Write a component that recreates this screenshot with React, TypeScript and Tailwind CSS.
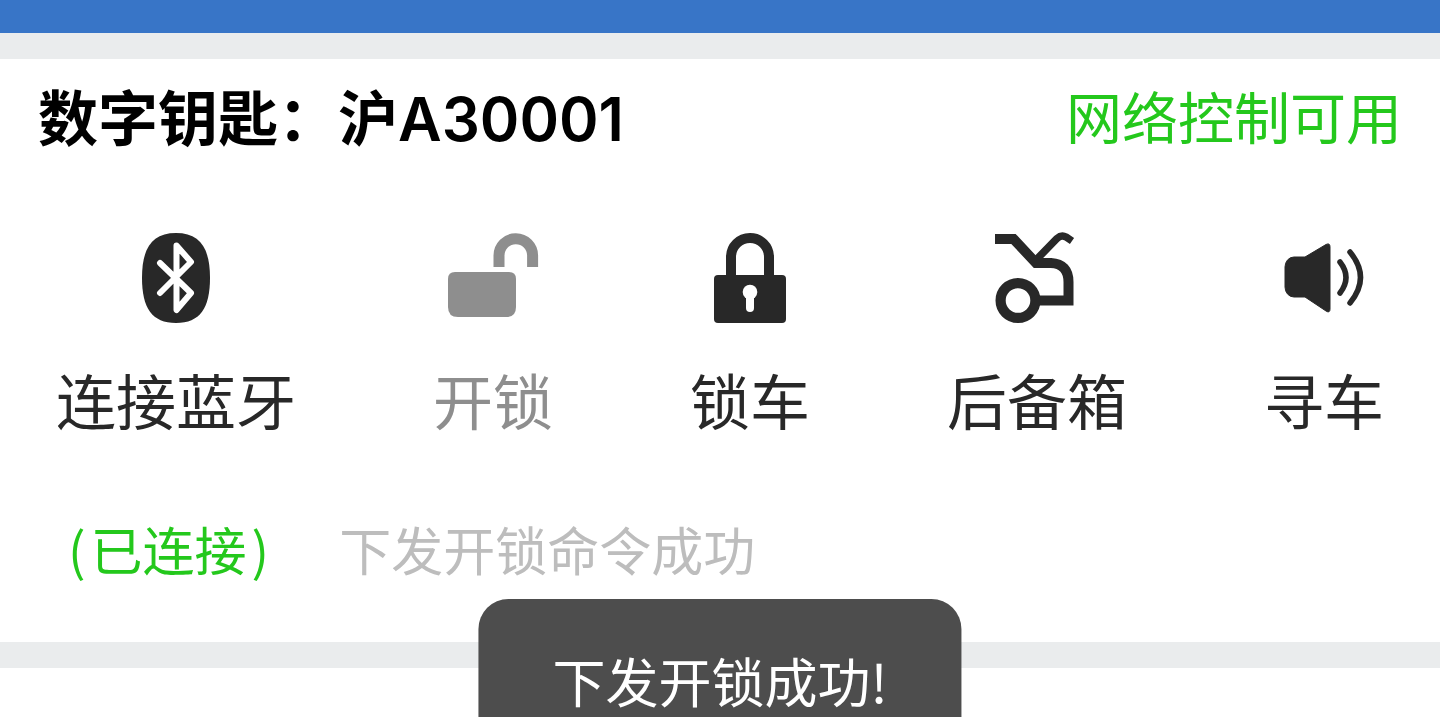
import type { ReactNode } from "react";

interface IAction {
  label: string;
  icon: ReactNode;
  disabled?: boolean;
}

function Icon({ children }: { children: ReactNode }) {
  return (
    <svg viewBox="0 0 90 90" className="size-[90px] overflow-visible" fill="none" aria-hidden="true">
      {children}
    </svg>
  );
}

const actions: IAction[] = [
  {
    label: "连接蓝牙",
    icon: (
      <Icon>
        <path
          d="M45 0C69 0 79 15 79 45S69 90 45 90 11 75 11 45 21 0 45 0Z"
          fill="currentColor"
        />
        <path
          d="M29 30L60 60L45.500 77V12.500L60 29L29 60"
          stroke="white"
          strokeWidth="6"
          strokeLinecap="round"
          strokeLinejoin="round"
        />
      </Icon>
    ),
  },
  {
    label: "开锁",
    disabled: true,
    icon: (
      <Icon>
        <path
          d="M7 39H61Q68 39 68 46V74Q68 84 58 84H10Q0 84 0 74V46Q0 39 7 39Z"
          fill="currentColor"
        />
        <path d="M51 34V22.500a16.800 16.800 0 0 1 33.600 0V34" stroke="currentColor" strokeWidth="11" />
      </Icon>
    ),
  },
  {
    label: "锁车",
    icon: (
      <Icon>
        <rect x="9" y="42" width="72" height="48" rx="4" fill="currentColor" />
        <path d="M26 44V24a19 19 0 0 1 38 0V44" stroke="currentColor" strokeWidth="10" />
        <circle cx="45" cy="59" r="7.300" fill="white" />
        <path d="M45 60V75" stroke="white" strokeWidth="8" strokeLinecap="round" />
      </Icon>
    ),
  },
  {
    label: "后备箱",
    icon: (
      <Icon>
        <path
          d="M3 6H21.500L44 30H59Q76.500 31 76.500 49V67.500H46"
          stroke="currentColor"
          strokeWidth="10"
        />
        <path d="M44 27L65 5.500Q69.500 1.500 74 4L80 8" stroke="currentColor" strokeWidth="7.500" />
        <circle cx="26" cy="67.500" r="17.400" stroke="currentColor" strokeWidth="10.200" />
      </Icon>
    ),
  },
  {
    label: "寻车",
    icon: (
      <Icon>
        <path
          d="M15 24H26L47 11.500Q51 9.500 51 14V76Q51 80.500 47 78L26 64H15Q11 64 8.500 61Q6 58 6 54V34Q6 30 8.500 27Q11 24 15 24Z"
          fill="currentColor"
          stroke="currentColor"
          strokeLinejoin="round"
        />
        <path
          d="M61 29Q73 44.500 61 60M71 19Q92 44.500 71 70"
          stroke="currentColor"
          strokeWidth="5.500"
          strokeLinecap="round"
        />
      </Icon>
    ),
  },
];

function ActionButton({ action }: { action: IAction }) {
  return (
    <button
      type="button"
      disabled={action.disabled}
      className="flex flex-col items-center gap-[34px] whitespace-nowrap text-[#282828] disabled:text-[#8e8e8e]"
    >
      {action.icon}
      <span className="text-[60px] leading-[84px]">{action.label}</span>
    </button>
  );
}

export default function App() {
  return (
    <div className="min-h-screen bg-white font-['Noto_Sans_CJK_SC',sans-serif]">
      <header className="h-[33px] bg-[#3875c7]" />
      <main className="border-y-[26px] border-[#eaeced] bg-white pt-3 pb-[51px]">
        <div className="flex items-start justify-between px-[38px]">
          <h1 className="text-[60px] leading-[88px] font-bold text-black">
            数字钥匙：沪<span className="font-['Inter',sans-serif] font-semibold">A30001</span>
          </h1>
          <p className="text-[56px] leading-[88px] text-[#24c81c]">网络控制可用</p>
        </div>
        <div className="mt-[70px] flex justify-between px-14">
          {actions.map((action) => (
            <ActionButton key={action.label} action={action} />
          ))}
        </div>
        <div className="mt-[66px] flex items-center gap-[70px] pl-[68px] text-[52px] leading-[84px]">
          <p className="text-[#24c81c]">
            (<span className="mx-[5px]">已连接</span>)
          </p>
          <p className="text-[#bdbdbd]">下发开锁命令成功</p>
        </div>
      </main>
      <div
        role="status"
        className="fixed bottom-0 left-1/2 -translate-x-1/2 rounded-t-[30px] bg-[#4d4d4d] px-[74px] pt-11 text-[53px] leading-[74px] whitespace-nowrap text-white"
      >
        下发开锁成功!
      </div>
    </div>
  );
}
